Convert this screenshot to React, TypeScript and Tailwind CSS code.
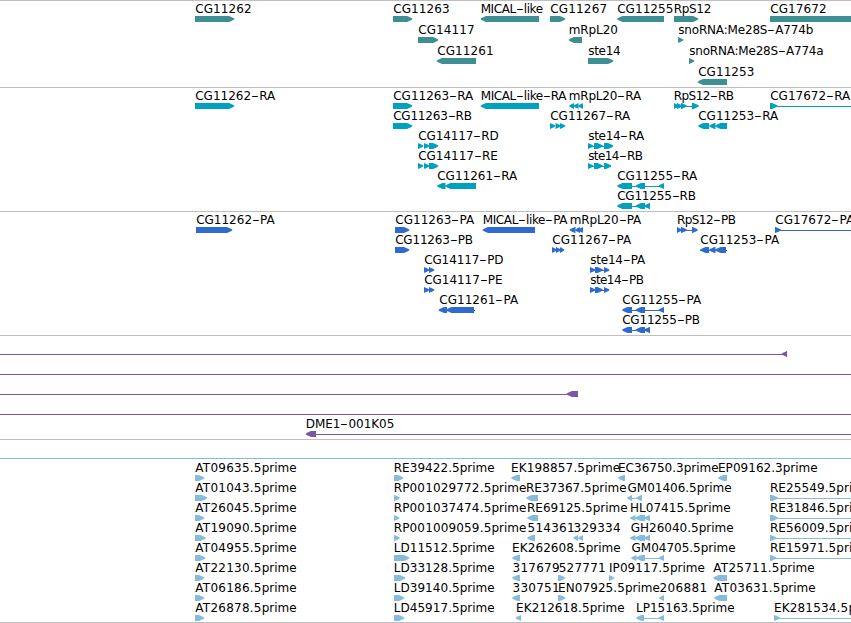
type Dir = 'R' | 'L';

interface Feature {
  /** Left and right edges of the label's ink. */
  label?: string;
  from?: number;
  to?: number;
  dir: Dir;
  /** Exon blocks, as [start, end] pairs. */
  blocks: [number, number][];
  /** Thin intron line. */
  line?: [number, number];
}

interface Track {
  name: string;
  height: string;
  laneHeight: string;
  color: string;
  lanes: Feature[][];
}

const f = (
  label: string,
  from: number,
  to: number,
  dir: Dir,
  blocks: [number, number][],
  line?: [number, number],
): Feature => ({ label, from, to, dir, blocks, line });

const wire = (start: number, end: number, dir: Dir = 'L', blocks: [number, number][] = []): Feature => ({
  dir,
  blocks,
  line: [start, end],
});

const TRACKS: Track[] = [
  {
    name: 'genes',
    height: 'h-[87px]',
    laneHeight: 'h-[21px]',
    color: 'text-[#3d8f94]',
    lanes: [
      [
        f('CG11262', 195.2, 251, 'R', [[195, 234.5]]),
        f('CG11263', 393.2, 449, 'R', [[393, 412.5]]),
        f('MICAL-like', 481.7, 542.5, 'L', [[480.5, 539]]),
        f('CG11267', 550.2, 606.5, 'R', [[550, 565.5]]),
        f('CG11255', 617.2, 672.7, 'L', [[617, 664]]),
        f('RpS12', 674.7, 710.7, 'R', [[674, 698.5]]),
        f('CG17672', 770.2, 826, 'R', [[770, 870]]),
      ],
      [
        f('CG14117', 418.2, 474, 'R', [[418, 438.5]]),
        f('mRpL20', 569.7, 617.3, 'L', [[568.5, 582]]),
        f('snoRNA:Me28S-A774b', 678.2, 812.5, 'R', [[678, 683.5]]),
      ],
      [
        f('CG11261', 437.2, 493, 'L', [[436.5, 476]]),
        f('ste14', 588.2, 620, 'R', [[588, 613.5]]),
        f('snoRNA:Me28S-A774a', 689.2, 823, 'R', [[689, 694.5]]),
      ],
      [f('CG11253', 698.2, 753.7, 'L', [[697.5, 727]])],
    ],
  },
  {
    name: 'transcripts',
    height: 'h-[124px]',
    laneHeight: 'h-5',
    color: 'text-[#00a0c0]',
    lanes: [
      [
        f('CG11262-RA', 195.2, 276, 'R', [[195, 234.5]]),
        f('CG11263-RA', 393.2, 474, 'R', [[393, 412.5]]),
        f('MICAL-like-RA', 481.7, 567, 'L', [[480.5, 539]]),
        f('mRpL20-RA', 569.7, 642, 'L', [[569, 574], [573.5, 578.5], [578, 583]]),
        f('RpS12-RB', 674.7, 733.7, 'R', [[674, 679], [677, 682.5], [681, 687], [692, 699]], [674, 698]),
        f('CG17672-RA', 770.2, 851, 'R', [[770, 777.5]], [770, 851]),
      ],
      [
        f('CG11263-RB', 393.2, 471.7, 'R', [[393, 412.5]]),
        f('CG11267-RA', 550.2, 631, 'R', [[550, 555.5], [555.5, 561], [560, 565.5]]),
        f('CG11253-RA', 698.2, 779, 'L', [[698, 709], [709, 715.5], [715, 727]]),
      ],
      [
        f('CG14117-RD', 418.2, 498.5, 'R', [[418, 423.5], [424, 429.5], [429, 438.5]]),
        f('ste14-RA', 588.2, 645, 'R', [[588, 593.5], [594, 603], [604, 613.5]], [588, 613]),
      ],
      [
        f('CG14117-RE', 418.2, 497.3, 'R', [[418, 423.5], [424, 429.5], [429, 438.5]]),
        f('ste14-RB', 588.2, 642.7, 'R', [[588, 593.5], [594, 603], [604, 611.5]], [588, 611]),
      ],
      [
        f('CG11261-RA', 437.2, 518, 'L', [[437, 445.5], [445, 476]]),
        f('CG11255-RA', 617.2, 698, 'L', [[617, 632], [635.5, 645], [658.5, 664]], [620, 664]),
      ],
      [f('CG11255-RB', 617.2, 695.7, 'L', [[617, 632], [635.5, 645], [644, 650]], [620, 650])],
    ],
  },
  {
    name: 'proteins',
    height: 'h-[124px]',
    laneHeight: 'h-5',
    color: 'text-[#2f6bce]',
    lanes: [
      [
        f('CG11262-PA', 196.2, 275.5, 'R', [[196, 232.5]]),
        f('CG11263-PA', 395.2, 475, 'R', [[395, 409.5]]),
        f('MICAL-like-PA', 483.7, 568, 'L', [[482.5, 535]]),
        f('mRpL20-PA', 570.7, 642, 'L', [[569.5, 575.5], [575, 580], [578, 583]]),
        f('RpS12-PB', 677.9, 735.7, 'R', [[677, 682], [681, 687], [692, 698]], [677, 697]),
        f('CG17672-PA', 775.2, 855, 'R', [[775, 781]], [775, 851]),
      ],
      [
        f('CG11263-PB', 395.2, 472.7, 'R', [[395, 409.5]]),
        f('CG11267-PA', 552.2, 632, 'R', [[552, 557], [556, 561], [560, 564.5]]),
        f('CG11253-PA', 700.2, 780, 'L', [[700, 709], [709, 715.5], [715, 726]], [700, 727]),
      ],
      [
        f('CG14117-PD', 424.2, 503.3, 'R', [[424, 429.5], [429, 434.5]]),
        f('ste14-PA', 590.2, 646, 'R', [[590, 595.5], [595, 603], [604, 609.5]], [590, 609]),
      ],
      [
        f('CG14117-PE', 424.2, 502, 'R', [[424, 429.5], [429, 434.5]]),
        f('ste14-PB', 590.2, 643.7, 'R', [[590, 595.5], [595, 603], [604, 609.5]], [590, 609]),
      ],
      [
        f('CG11261-PA', 439.2, 519, 'L', [[438.5, 447], [446, 474]], [439, 475]),
        f('CG11255-PA', 622.2, 702, 'L', [[622, 632], [635.5, 645], [658.5, 664]], [624, 664]),
      ],
      [f('CG11255-PB', 622.2, 699.7, 'L', [[622, 632], [635.5, 645], [644, 650]], [624, 650])],
    ],
  },
  {
    name: 'clones',
    height: 'h-[104px]',
    laneHeight: 'h-5',
    color: 'text-[#7558a8]',
    lanes: [
      [wire(0, 787, 'L', [[781.5, 787]])],
      [wire(0, 851)],
      [wire(0, 577, 'L', [[566.5, 578]])],
      [wire(0, 851)],
      [f('DME1-001K05', 306.7, 393.7, 'L', [[305.5, 316]], [308, 851])],
    ],
  },
  {
    name: 'ests',
    height: 'h-[183px]',
    laneHeight: 'h-5',
    color: 'text-[#87bbdc]',
    lanes: [
      [wire(0, 851)],
      [
        f('AT09635.5prime', 195.3, 296.3, 'R', [[195, 204.5]]),
        f('RE39422.5prime', 394.7, 494.3, 'R', [[394, 403.5]]),
        f('EK198857.5prime', 512, 619.7, 'L', [[511, 520]]),
        f('EC36750.3prime', 619, 718.3, 'L', [[618, 625]]),
        f('EP09162.3prime', 719, 817.3, 'L', [[718, 727]]),
      ],
      [
        f('AT01043.5prime', 195.3, 296.3, 'R', [[195, 207.5]]),
        f('RP001029772.5prime', 394.7, 526, 'R', [[394, 400]]),
        f('RE37367.5prime', 527, 626.3, 'L', [[526, 538]]),
        f('GM01406.5prime', 627.5, 731.3, 'L', [[627, 632], [636, 642]], [629, 642]),
        f('RE25549.5prime', 770.9, 870.9, 'R', [[770, 778]], [770, 851]),
      ],
      [
        f('AT26045.5prime', 195.3, 296.3, 'R', [[195, 204.5]]),
        f('RP001037474.5prime', 394.7, 526, 'R', [[394, 399.5]]),
        f('RE69125.5prime', 528, 627.3, 'L', [[527, 538]]),
        f('HL07415.5prime', 630.9, 730.3, 'L', [[630, 635.5], [635, 645], [644, 650]], [630, 650]),
        f('RE31846.5prime', 770.9, 870.9, 'R', [[770, 778]], [770, 851]),
      ],
      [
        f('AT19090.5prime', 195.3, 296.3, 'R', [[195, 206]]),
        f('RP001009059.5prime', 394.7, 526, 'R', [[394, 400]]),
        f('514361', 527.5, 574, 'L', [[527, 535]]),
        f('329334', 573.5, 620, 'L', [[573, 578], [578, 583]]),
        f('GH26040.5prime', 630.7, 733.3, 'L', [[630, 635.5], [635, 645], [644, 650]], [630, 650]),
        f('RE56009.5prime', 770.9, 870.9, 'R', [[770, 776.5]], [770, 851]),
      ],
      [
        f('AT04955.5prime', 195.3, 296.3, 'R', [[195, 205.5]]),
        f('LD11512.5prime', 394.7, 494.3, 'R', [[394, 409.5]]),
        f('EK262608.5prime', 513, 620.3, 'L', [[512, 520]]),
        f('GM04705.5prime', 631.5, 735.3, 'L', [[631, 636.5], [636, 645], [658.5, 664]], [632, 664]),
        f('RE15971.5prime', 770.9, 870.9, 'R', [[770, 776.5]], [770, 851]),
      ],
      [
        f('AT22130.5prime', 195.3, 296.3, 'R', [[195, 204.5]]),
        f('LD33128.5prime', 394.7, 494.3, 'R', [[394, 405.5]]),
        f('317679', 512.5, 559, 'L', [[512, 520]]),
        f('527771', 558.7, 605, 'R', [[558, 565.5]]),
        f('IP09117.5prime', 610, 704.5, 'R', [[609, 614.5]]),
        f('AT25711.5prime', 713.3, 814.3, 'L', [[713, 727]]),
      ],
      [
        f('AT06186.5prime', 195.3, 296.3, 'R', [[195, 204.5]]),
        f('LD39140.5prime', 394.7, 494.3, 'R', [[394, 404.5]]),
        f('330751', 512.5, 559, 'L', [[512, 520]]),
        f('EN07925.5prime', 559, 659.5, 'R', [[558, 565.5]]),
        f('206881', 659.5, 706.5, 'L', [[659, 664]]),
        f('AT03631.5prime', 714.3, 815.3, 'L', [[714, 727]]),
      ],
      [
        f('AT26878.5prime', 195.3, 296.3, 'R', [[195, 204.5]]),
        f('LD45917.5prime', 394.7, 494.3, 'R', [[394, 404.5]]),
        f('EK212618.5prime', 517, 624.3, 'L', [[515.5, 521]]),
        f('LP15163.5prime', 637, 734.3, 'L', [[636, 644], [658.5, 664]], [638, 664]),
        f('EK281534.5prime', 774.9, 883, 'R', [[774, 780]], [774, 851]),
      ],
    ],
  },
];

const pen = document.createElement('canvas').getContext('2d')!;
const HYPHEN_ADVANCE = 8;

/** Start of the label and the tracking of its loose part, so that its ink ends at `to`. */
function fit(text: string, from: number, to: number) {
  pen.font = '12px "DejaVu Sans"';
  const m = pen.measureText(text);
  const inkLeft = -m.actualBoundingBoxLeft;
  const hyphens = text.split('-').length - 1;
  const ink =
    m.actualBoundingBoxRight - inkLeft + hyphens * (HYPHEN_ADVANCE - pen.measureText('-').width);
  const loose = text.endsWith('prime') ? text.length - 5 : text.length - 1 - hyphens;
  return { left: from - inkLeft, tracking: (to - from - ink) / loose };
}

/** Label with wide hyphens; the word "prime" keeps its natural spacing. */
function Label({ text, from, to }: { text: string; from: number; to: number }) {
  const { left, tracking } = fit(text, from, to);
  return (
    <span
      className="absolute top-px whitespace-pre text-[12px] leading-[15px]"
      style={{ left: `${left}px`, letterSpacing: `${tracking}px` }}
    >
      {text.split(/(-|prime)/).map((part, i) =>
        part === '-' ? (
          <span key={i} className="inline-block w-2 scale-x-[1.8] text-center tracking-normal">
            -
          </span>
        ) : part === 'prime' ? (
          <span key={i} className="tracking-normal">
            prime
          </span>
        ) : (
          part
        ),
      )}
    </span>
  );
}

function arrow([a, b]: [number, number], dir: Dir) {
  const tip = Math.min(5.5, b - a);
  return dir === 'R'
    ? `${a},0 ${b - tip},0 ${b - 1},2 ${b},2.7 ${b - 1},4 ${b - tip},6 ${a},6`
    : `${b},0 ${a + tip},0 ${a + 1},2 ${a},3 ${a + 1},4 ${a + tip},6 ${b},6`;
}

function Lane({ features, height }: { features: Feature[]; height: string }) {
  return (
    <div className={`shrink-0 ${height}`}>
      <div className="relative h-[15px] text-black">
        {features.map(
          (x) => x.label && <Label key={x.label} text={x.label} from={x.from!} to={x.to!} />,
        )}
      </div>
      <svg width="851" height="6" viewBox="0 0 851 6" className="block" fill="currentColor">
        {features.map((x, i) => (
          <g key={i}>
            {x.line && <rect x={x.line[0]} y="3" width={x.line[1] - x.line[0]} height="1" />}
            {x.blocks.map((b) => (
              <polygon key={b[0]} points={arrow(b, x.dir)} />
            ))}
          </g>
        ))}
      </svg>
    </div>
  );
}

export default function App() {
  return (
    <main className="flex h-[623px] w-[851px] flex-col overflow-hidden border-b border-[#bebebe] bg-white font-['DejaVu_Sans',sans-serif]">
      {TRACKS.map((t) => (
        <section
          key={t.name}
          className={`flex shrink-0 flex-col border-t border-[#bebebe] ${t.height} ${t.color}`}
        >
          {t.lanes.map((features, i) => (
            <Lane key={i} features={features} height={t.laneHeight} />
          ))}
        </section>
      ))}
    </main>
  );
}
